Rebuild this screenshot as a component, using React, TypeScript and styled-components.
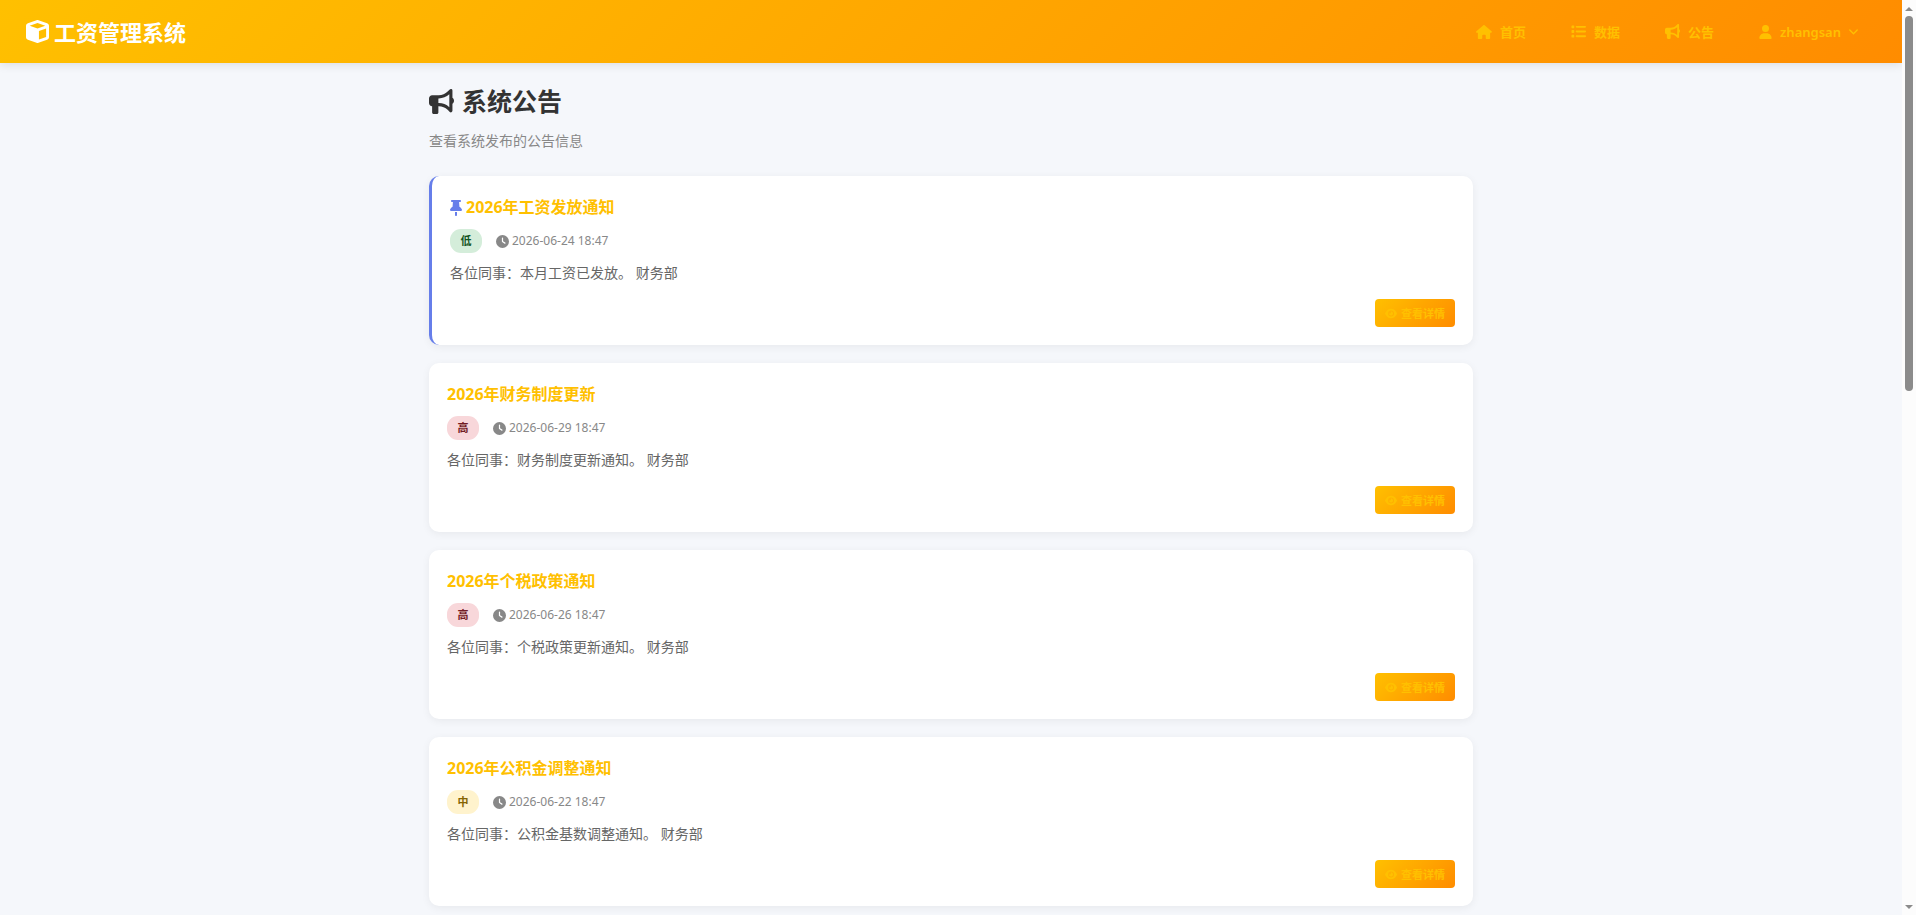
import React from "react";
import styled, { createGlobalStyle } from "styled-components";
import {
  FaBullhorn,
  FaClock,
  FaCube,
  FaEye,
  FaHouse,
  FaList,
  FaThumbtack,
  FaUser,
} from "react-icons/fa6";

const GlobalStyle = createGlobalStyle`
  *, *::before, *::after { box-sizing: border-box; }
  body {
    margin: 0;
    background: #f5f7fb;
    color: #333;
    font-family: "Noto Sans", "Noto Sans CJK SC", sans-serif;
    font-size: 14px;
  }
  h1, h2, p { margin: 0; }
  a { text-decoration: none; }
`;

const Shell = styled.div`
  display: grid;
  grid-template-columns: minmax(0, 1fr) 14px;
  height: 100vh;
  overflow: hidden;
`;

const Page = styled.div`
  height: 100vh;
  overflow: hidden;
`;

const Icon = styled.span<{ $size: number; $width?: number; $color?: string }>`
  display: inline-flex;
  flex: none;
  color: ${(p) => p.$color ?? "inherit"};
  svg {
    display: block;
    height: ${(p) => p.$size}px;
    width: ${(p) => p.$width ?? p.$size}px;
  }
`;

const Header = styled.header`
  display: flex;
  align-items: center;
  justify-content: space-between;
  height: 63px;
  padding: 0 26px;
  background: linear-gradient(135deg, #ffc000 0%, #ff8c00 100%);
  box-shadow: 0 2px 9px rgba(0, 0, 0, 0.1);
`;

const Brand = styled.a`
  display: flex;
  align-items: center;
  gap: 5px;
  color: #fff;
  font-size: 22px;
  font-weight: 700;
  line-height: 30px;
`;

const Nav = styled.nav`
  display: flex;
  gap: 9px;
`;

const navItem = `
  display: flex;
  align-items: center;
  gap: 8px;
  padding: 8px 18px;
  border: 0;
  background: none;
  color: #ffc000;
  font-family: inherit;
  font-size: 13px;
  font-weight: 700;
  line-height: 20px;
`;

const NavLink = styled.a`
  ${navItem}
`;

const UserButton = styled.button`
  ${navItem}
  font-weight: 600;
`;

const Main = styled.main`
  max-width: 1080px;
  margin: 0 auto;
  padding: 18px;
`;

const PageHead = styled.div`
  margin-bottom: 24px;
`;

const PageTitle = styled.h1`
  display: flex;
  align-items: center;
  gap: 8px;
  margin-bottom: 9px;
  font-size: 25px;
  font-weight: 700;
  line-height: 40px;
`;

const PageIntro = styled.p`
  color: #888;
  line-height: 22px;
`;

const List = styled.div`
  display: grid;
  gap: 18px;
`;

const Card = styled.article<{ $pinned?: boolean }>`
  padding: 18px;
  border-left: ${(p) => (p.$pinned ? "3px solid #667eea" : "0")};
  border-radius: 10px;
  background: #fff;
  box-shadow: 0 2px 9px rgba(0, 0, 0, 0.06);
`;

const CardTitle = styled.h2`
  display: flex;
  align-items: center;
  gap: 4px;
  margin-bottom: 8px;
  font-size: 16px;
  font-weight: 700;
  line-height: 27px;
  a { color: #ffc000; }
`;

const Meta = styled.div`
  display: flex;
  align-items: center;
  gap: 14px;
  margin-bottom: 8px;
`;

const levels = {
  低: { bg: "#d4edda", fg: "#155724" },
  中: { bg: "#fff3cd", fg: "#856404" },
  高: { bg: "#f8d7da", fg: "#721c24" },
};

type Level = keyof typeof levels;

const Badge = styled.span<{ $level: Level }>`
  min-width: 32px;
  padding: 0 10px;
  border-radius: 11px;
  background: ${(p) => levels[p.$level].bg};
  color: ${(p) => levels[p.$level].fg};
  font-size: 11px;
  font-weight: 700;
  line-height: 24px;
  text-align: center;
`;

const Time = styled.time`
  display: flex;
  align-items: center;
  gap: 3px;
  color: #888;
  font-size: 12px;
  line-height: 20px;
`;

const Content = styled.p`
  margin-bottom: 14px;
  color: #666;
  line-height: 24px;
`;

const Actions = styled.div`
  display: flex;
  justify-content: flex-end;
`;

const DetailButton = styled.button`
  display: flex;
  align-items: center;
  gap: 4px;
  height: 28px;
  padding: 0 10px;
  border: 0;
  border-radius: 4px;
  background: linear-gradient(135deg, #ffc000 0%, #ff8c00 100%);
  color: #ffc000;
  font-family: inherit;
  font-size: 11px;
  font-weight: 600;
`;

const Scrollbar = styled.div`
  display: flex;
  flex-direction: column;
  align-items: center;
  padding: 7px 0 6px;
  background: #fcfcfc;
`;

const Thumb = styled.div`
  width: 8px;
  height: 41vh;
  margin: 5px 0 auto;
  border-radius: 4px;
  background: #8b8b8b;
`;

const Arrow = ({ down }: { down?: boolean }) => (
  <svg width="8" height="4" viewBox="0 0 8 4" fill="#8b8b8b" aria-hidden="true">
    <path d={down ? "M0 0h8L4 4z" : "M0 4h8L4 0z"} />
  </svg>
);

type Notice = { title: string; level: Level; time: string; text: string; pinned?: boolean };

const notices: Notice[] = [
  { title: "2026年工资发放通知", level: "低", time: "2026-06-24 18:47", text: "各位同事：本月工资已发放。 财务部", pinned: true },
  { title: "2026年财务制度更新", level: "高", time: "2026-06-29 18:47", text: "各位同事：财务制度更新通知。 财务部" },
  { title: "2026年个税政策通知", level: "高", time: "2026-06-26 18:47", text: "各位同事：个税政策更新通知。 财务部" },
  { title: "2026年公积金调整通知", level: "中", time: "2026-06-22 18:47", text: "各位同事：公积金基数调整通知。 财务部" },
];

export default function App() {
  return (
    <>
      <GlobalStyle />
      <Shell>
        <Page>
          <Header>
            <Brand href="#">
              <Icon $size={23}><FaCube /></Icon>
              工资管理系统
            </Brand>
            <Nav>
              <NavLink href="#"><Icon $size={14} $width={16}><FaHouse /></Icon>首页</NavLink>
              <NavLink href="#"><Icon $size={15}><FaList /></Icon>数据</NavLink>
              <NavLink href="#"><Icon $size={15}><FaBullhorn /></Icon>公告</NavLink>
              <UserButton type="button">
                <Icon $size={14} $width={13}><FaUser /></Icon>
                zhangsan
                <svg width="9" height="6" viewBox="0 0 9 6" fill="none" stroke="currentColor" strokeWidth="1.3" strokeLinecap="round" strokeLinejoin="round" aria-hidden="true">
                  <path d="M.8 1 4.5 4.7 8.2 1" />
                </svg>
              </UserButton>
            </Nav>
          </Header>
          <Main>
            <PageHead>
              <PageTitle><Icon $size={25}><FaBullhorn /></Icon>系统公告</PageTitle>
              <PageIntro>查看系统发布的公告信息</PageIntro>
            </PageHead>
            <List>
              {notices.map((n) => (
                <Card key={n.title} $pinned={n.pinned}>
                  <CardTitle>
                    {n.pinned && <Icon $size={16} $width={12} $color="#667eea"><FaThumbtack /></Icon>}
                    <a href="#">{n.title}</a>
                  </CardTitle>
                  <Meta>
                    <Badge $level={n.level}>{n.level}</Badge>
                    <Time><Icon $size={13}><FaClock /></Icon>{n.time}</Time>
                  </Meta>
                  <Content>{n.text}</Content>
                  <Actions>
                    <DetailButton type="button"><Icon $size={11} $width={12}><FaEye /></Icon>查看详情</DetailButton>
                  </Actions>
                </Card>
              ))}
            </List>
          </Main>
        </Page>
        <Scrollbar>
          <Arrow />
          <Thumb />
          <Arrow down />
        </Scrollbar>
      </Shell>
    </>
  );
}
